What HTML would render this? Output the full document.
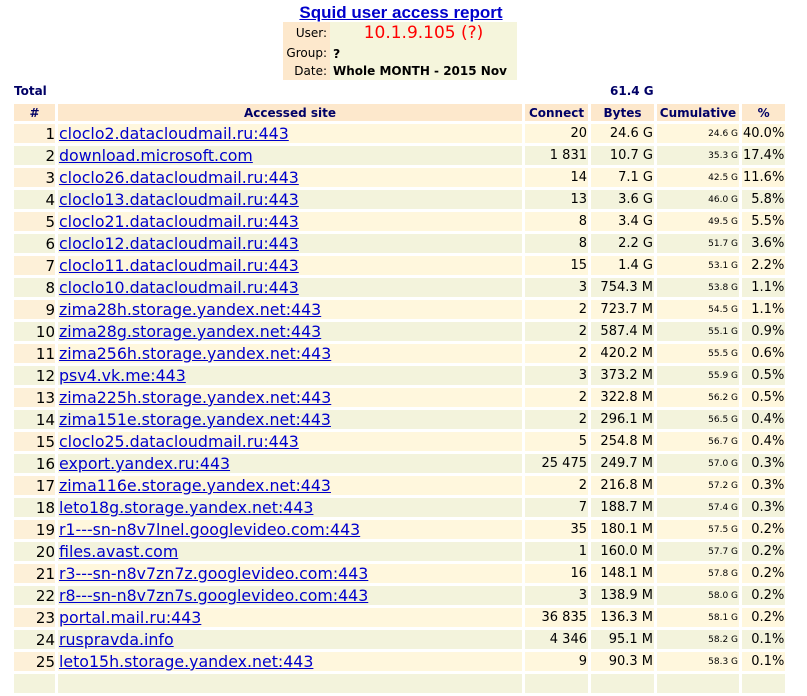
<!DOCTYPE html>
<html><head><meta charset="utf-8"><style>
body{margin:0;background:#fff;font-family:"DejaVu Sans","Liberation Sans",sans-serif;width:807px;height:675px;overflow:hidden;position:relative}
.title{position:absolute;left:0;width:802px;top:3px;text-align:center;font:bold 17px "Liberation Sans",sans-serif;color:#00c;text-decoration:underline}
.info{position:absolute;left:283px;top:22px;border-collapse:collapse}
.info td{padding:0 3px;height:18px;font-size:12px;white-space:nowrap}
.info td.l{background:#fde8cc;text-align:right;width:41px}
.info td.v{background:#f5f5dc;width:181px;font-weight:bold;font-size:12.5px}
.total{position:absolute;top:84px;font:bold 12px "DejaVu Sans",sans-serif;color:#006}
table.m{position:absolute;left:11px;top:101px;border-collapse:separate;border-spacing:3px;table-layout:fixed}
table.m th{background:#fde8cc;color:#006;font-size:12px;height:17px;padding:0;font-weight:bold}
table.m td{height:19px;padding:0 1px;font-size:13px;white-space:nowrap;overflow:hidden;text-align:right}
table.m tr.o td{background:#fff7dd}
table.m tr.e td{background:#f3f3dc}
table.m tr.o td.n{background:#fdf0d8}
table.m td.s{text-align:left;font-size:15.8px}
table.m td.s a{color:#00c;text-decoration:underline}
table.m td.n{font-size:15px;padding-right:0}
table.m td.c{font-size:9px}
table.m td.p{font-size:13px}
</style></head><body>
<div class="title">Squid user access report</div>
<table class="info">
<tr><td class="l">User:</td><td class="v" style="color:#f00;font-weight:normal;font-size:17px;text-align:center;height:22px">10.1.9.105 (?)</td></tr>
<tr><td class="l">Group:</td><td class="v">?</td></tr>
<tr><td class="l">Date:</td><td class="v" style="font-size:12px">Whole MONTH - 2015 Nov</td></tr>
</table>
<div class="total" style="left:14px">Total</div>
<div class="total" style="left:610px">61.4 G</div>
<table class="m">
<colgroup><col style="width:41px"><col style="width:464px"><col style="width:63px"><col style="width:63px"><col style="width:82px"><col style="width:41px"></colgroup>
<tr><th>#</th><th>Accessed site</th><th>Connect</th><th>Bytes</th><th>Cumulative</th><th>%</th></tr>
<tr class="o"><td class="n">1</td><td class="s"><a>cloclo2.datacloudmail.ru:443</a></td><td>20</td><td>24.6 G</td><td class="c">24.6 G</td><td class="p">40.0%</td></tr>
<tr class="e"><td class="n">2</td><td class="s"><a>download.microsoft.com</a></td><td>1 831</td><td>10.7 G</td><td class="c">35.3 G</td><td class="p">17.4%</td></tr>
<tr class="o"><td class="n">3</td><td class="s"><a>cloclo26.datacloudmail.ru:443</a></td><td>14</td><td>7.1 G</td><td class="c">42.5 G</td><td class="p">11.6%</td></tr>
<tr class="e"><td class="n">4</td><td class="s"><a>cloclo13.datacloudmail.ru:443</a></td><td>13</td><td>3.6 G</td><td class="c">46.0 G</td><td class="p">5.8%</td></tr>
<tr class="o"><td class="n">5</td><td class="s"><a>cloclo21.datacloudmail.ru:443</a></td><td>8</td><td>3.4 G</td><td class="c">49.5 G</td><td class="p">5.5%</td></tr>
<tr class="e"><td class="n">6</td><td class="s"><a>cloclo12.datacloudmail.ru:443</a></td><td>8</td><td>2.2 G</td><td class="c">51.7 G</td><td class="p">3.6%</td></tr>
<tr class="o"><td class="n">7</td><td class="s"><a>cloclo11.datacloudmail.ru:443</a></td><td>15</td><td>1.4 G</td><td class="c">53.1 G</td><td class="p">2.2%</td></tr>
<tr class="e"><td class="n">8</td><td class="s"><a>cloclo10.datacloudmail.ru:443</a></td><td>3</td><td>754.3 M</td><td class="c">53.8 G</td><td class="p">1.1%</td></tr>
<tr class="o"><td class="n">9</td><td class="s"><a>zima28h.storage.yandex.net:443</a></td><td>2</td><td>723.7 M</td><td class="c">54.5 G</td><td class="p">1.1%</td></tr>
<tr class="e"><td class="n">10</td><td class="s"><a>zima28g.storage.yandex.net:443</a></td><td>2</td><td>587.4 M</td><td class="c">55.1 G</td><td class="p">0.9%</td></tr>
<tr class="o"><td class="n">11</td><td class="s"><a>zima256h.storage.yandex.net:443</a></td><td>2</td><td>420.2 M</td><td class="c">55.5 G</td><td class="p">0.6%</td></tr>
<tr class="e"><td class="n">12</td><td class="s"><a>psv4.vk.me:443</a></td><td>3</td><td>373.2 M</td><td class="c">55.9 G</td><td class="p">0.5%</td></tr>
<tr class="o"><td class="n">13</td><td class="s"><a>zima225h.storage.yandex.net:443</a></td><td>2</td><td>322.8 M</td><td class="c">56.2 G</td><td class="p">0.5%</td></tr>
<tr class="e"><td class="n">14</td><td class="s"><a>zima151e.storage.yandex.net:443</a></td><td>2</td><td>296.1 M</td><td class="c">56.5 G</td><td class="p">0.4%</td></tr>
<tr class="o"><td class="n">15</td><td class="s"><a>cloclo25.datacloudmail.ru:443</a></td><td>5</td><td>254.8 M</td><td class="c">56.7 G</td><td class="p">0.4%</td></tr>
<tr class="e"><td class="n">16</td><td class="s"><a>export.yandex.ru:443</a></td><td>25 475</td><td>249.7 M</td><td class="c">57.0 G</td><td class="p">0.3%</td></tr>
<tr class="o"><td class="n">17</td><td class="s"><a>zima116e.storage.yandex.net:443</a></td><td>2</td><td>216.8 M</td><td class="c">57.2 G</td><td class="p">0.3%</td></tr>
<tr class="e"><td class="n">18</td><td class="s"><a>leto18g.storage.yandex.net:443</a></td><td>7</td><td>188.7 M</td><td class="c">57.4 G</td><td class="p">0.3%</td></tr>
<tr class="o"><td class="n">19</td><td class="s"><a>r1---sn-n8v7lnel.googlevideo.com:443</a></td><td>35</td><td>180.1 M</td><td class="c">57.5 G</td><td class="p">0.2%</td></tr>
<tr class="e"><td class="n">20</td><td class="s"><a>files.avast.com</a></td><td>1</td><td>160.0 M</td><td class="c">57.7 G</td><td class="p">0.2%</td></tr>
<tr class="o"><td class="n">21</td><td class="s"><a>r3---sn-n8v7zn7z.googlevideo.com:443</a></td><td>16</td><td>148.1 M</td><td class="c">57.8 G</td><td class="p">0.2%</td></tr>
<tr class="e"><td class="n">22</td><td class="s"><a>r8---sn-n8v7zn7s.googlevideo.com:443</a></td><td>3</td><td>138.9 M</td><td class="c">58.0 G</td><td class="p">0.2%</td></tr>
<tr class="o"><td class="n">23</td><td class="s"><a>portal.mail.ru:443</a></td><td>36 835</td><td>136.3 M</td><td class="c">58.1 G</td><td class="p">0.2%</td></tr>
<tr class="e"><td class="n">24</td><td class="s"><a>ruspravda.info</a></td><td>4 346</td><td>95.1 M</td><td class="c">58.2 G</td><td class="p">0.1%</td></tr>
<tr class="o"><td class="n">25</td><td class="s"><a>leto15h.storage.yandex.net:443</a></td><td>9</td><td>90.3 M</td><td class="c">58.3 G</td><td class="p">0.1%</td></tr>
<tr class="e"><td class="n"></td><td class="s"><a></a></td><td></td><td></td><td class="c"></td><td class="p"></td></tr>
</table>
</body></html>
